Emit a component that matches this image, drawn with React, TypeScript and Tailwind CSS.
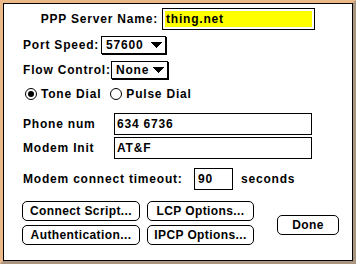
const T = "font-['Liberation_Sans',Arial,sans-serif] text-[12px] font-bold tracking-[0.8px] leading-none text-black whitespace-nowrap";
const TB = "font-['Liberation_Sans',Arial,sans-serif] text-[12px] font-bold tracking-[0.4px] leading-none text-black whitespace-nowrap";

function Tri() {
  return (
    <svg width="11" height="6" viewBox="0 0 11 6" shapeRendering="crispEdges">
      <path d="M0 0h11v1H0z M1 1h9v1H1z M2 2h7v1H2z M3 3h5v1H3z M4 4h3v1H4z M5 5h1v1H5z" fill="#000" />
    </svg>
  );
}

function Popup({ value, cls }: { value: string; cls: string }) {
  return (
    <div className={`h-[18px] border border-black bg-white flex items-center justify-between pl-[4px] pr-[3px] shadow-[1px_1px_0_0_#000] ${cls}`}>
      <span className={T}>{value}</span>
      <Tri />
    </div>
  );
}

function Radio({ on }: { on: boolean }) {
  return (
    <svg width="12" height="12" viewBox="0 0 12 12">
      <circle cx="6" cy="6" r="5.5" fill="#fff" stroke="#000" strokeWidth="1" />
      {on && <circle cx="6" cy="6" r="3" fill="#000" />}
    </svg>
  );
}

function Btn({ label, cls }: { label: string; cls: string }) {
  return (
    <div className={`h-[20px] rounded-[5px] border border-black bg-white flex items-center justify-center ${cls}`}>
      <span className={TB}>{label}</span>
    </div>
  );
}

export default function App() {
  return (
    <div className="w-[356px] h-[264px] border-[3px] border-t-[#ebb887] border-l-[#ebb887] border-r-[#a9957f] border-b-[#a9957f]">
      <div className="w-full h-full border border-black bg-white flex flex-col pl-[19px]">
        {/* Row 1 */}
        <div className="mt-[4px] h-[22px] flex items-center">
          <div className={`w-[135px] text-right ${T}`}>PPP Server Name:</div>
          <div className="ml-[4px] w-[153px] h-[22px] border border-black p-[2px]">
            <div className="h-full bg-[#ffff00] flex items-center pl-[1px]">
              <span className={T}>thing.net</span>
            </div>
          </div>
        </div>
        {/* Row 2 */}
        <div className="mt-[6px] h-[19px] flex items-start">
          <div className={`w-[78px] h-[18px] flex items-center ${T}`}>Port Speed:</div>
          <Popup value="57600" cls="w-[65px]" />
        </div>
        {/* Row 3 */}
        <div className="mt-[6px] h-[19px] flex items-start">
          <div className={`w-[88px] h-[18px] flex items-center ${T}`}>Flow Control:</div>
          <Popup value="None" cls="w-[57px]" />
        </div>
        {/* Row 4 */}
        <div className="mt-[6px] h-[16px] flex items-center">
          <div className="ml-[2px] flex items-center gap-[4px]">
            <Radio on={true} />
            <span className={T}>Tone Dial</span>
          </div>
          <div className="ml-[9px] flex items-center gap-[4px]">
            <Radio on={false} />
            <span className={T}>Pulse Dial</span>
          </div>
        </div>
        {/* Row 5 */}
        <div className="mt-[11px] h-[22px] flex items-center">
          <div className={`w-[91px] ${T}`}>Phone num</div>
          <div className="w-[198px] h-[22px] border border-black flex items-center pl-[2px]">
            <span className={T}>634 6736</span>
          </div>
        </div>
        {/* Row 6 */}
        <div className="mt-[2px] h-[22px] flex items-center">
          <div className={`w-[91px] ${T}`}>Modem Init</div>
          <div className="w-[198px] h-[22px] border border-black flex items-center pl-[2px]">
            <span className={T}>AT&amp;F</span>
          </div>
        </div>
        {/* Row 7 */}
        <div className="mt-[9px] h-[22px] flex items-center">
          <div className={`w-[171px] ${T}`}>Modem connect timeout:</div>
          <div className="w-[39px] h-[22px] border border-black flex items-center pl-[3px]">
            <span className={T}>90</span>
          </div>
          <span className={`ml-[8px] ${T}`}>seconds</span>
        </div>
        {/* Buttons */}
        <div className="mt-[11px] -ml-px flex items-start">
          <div className="flex flex-col gap-[4px]">
            <div className="flex gap-[7px]">
              <Btn label="Connect Script..." cls="w-[118px]" />
              <Btn label="LCP Options..." cls="w-[107px]" />
            </div>
            <div className="flex gap-[7px]">
              <Btn label="Authentication..." cls="w-[118px]" />
              <Btn label="IPCP Options..." cls="w-[107px]" />
            </div>
          </div>
          <Btn label="Done" cls="ml-[23px] mt-[14px] w-[62px]" />
        </div>
      </div>
    </div>
  );
}
